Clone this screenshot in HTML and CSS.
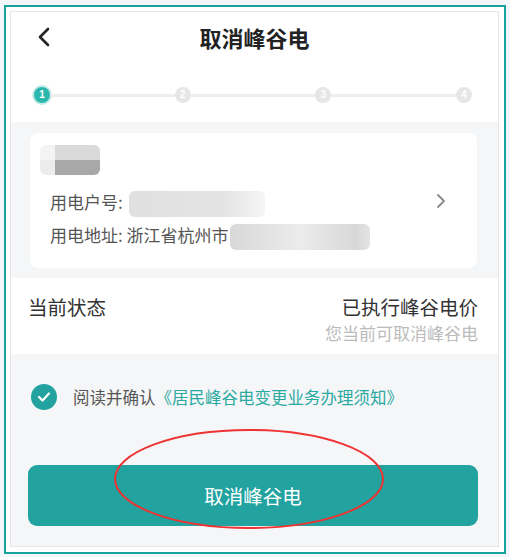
FILE: index.html
```html
<!DOCTYPE html>
<html lang="zh-CN">
<head>
  <meta charset="UTF-8" />
  <meta name="viewport" content="width=device-width, initial-scale=1.0" />
  <title>取消峰谷电</title>
  <link rel="stylesheet" href="styles.css">
</head>
<body>
  <div class="frame">
    <div class="phone">

      <header class="top">
        <div class="nav">
          <svg class="back" width="14" height="20" viewBox="0 0 14 20"><path d="M11 2 L3 10 L11 18" fill="none" stroke="#222" stroke-width="2.6" stroke-linecap="round" stroke-linejoin="round"/></svg>
          <h1 class="title">取消峰谷电</h1>
        </div>
        <div class="steps">
          <span class="dot active">1</span>
          <span class="bar"></span>
          <span class="dot">2</span>
          <span class="bar"></span>
          <span class="dot">3</span>
          <span class="bar"></span>
          <span class="dot">4</span>
        </div>
      </header>

      <div class="card">
        <div class="info">
          <div class="name-blur"></div>
          <p class="line">用电户号: <span class="blur no-blur"></span></p>
          <p class="line">用电地址: 浙江省杭州市<span class="blur addr-blur"></span></p>
        </div>
        <svg class="more" width="10" height="16" viewBox="0 0 10 16"><path d="M2 2 L8 8 L2 14" fill="none" stroke="#888" stroke-width="1.8" stroke-linecap="round" stroke-linejoin="round"/></svg>
      </div>

      <div class="status">
        <span class="status-label">当前状态</span>
        <div class="status-value">
          <span class="main">已执行峰谷电价</span>
          <span class="sub">您当前可取消峰谷电</span>
        </div>
      </div>

      <div class="agree">
        <span class="check">
          <svg width="14" height="12" viewBox="0 0 14 12"><path d="M2 6 L5.5 9.5 L12 2.5" fill="none" stroke="#fff" stroke-width="2.2" stroke-linecap="round" stroke-linejoin="round"/></svg>
        </span>
        <span class="agree-text">阅读并确认</span><span class="link">《居民峰谷电变更业务办理须知》</span>
      </div>

      <div class="action">
        <button class="submit">取消峰谷电</button>
        <svg class="mark" width="274" height="104" viewBox="0 0 274 104"><ellipse cx="137" cy="51" rx="134" ry="49" fill="none" stroke="#ee3333" stroke-width="2"/></svg>
      </div>

    </div>
  </div>
</body>
</html>
```

FILE: styles.css
```css
:root {
  --teal: #22a39f;
  --teal-light: #2bb7ae;
  --bg-page: #f5f6f8;
  --text: #333333;
  --text-mid: #555555;
  --text-light: #bbbbbb;
}

* { box-sizing: border-box; }
body {
  margin: 0;
  background: #f3f7fb;
  font-family: "Noto Sans CJK SC", "Noto Sans", sans-serif;
  color: var(--text);
}

.frame {
  margin: 5px 0 0 4px;
  width: 502px;
  height: 549px;
  border: 2px solid #17a29b;
  padding: 4px 0 0 4px;
  background: #fff;
}
.phone {
  width: 489px;
  height: 536px;
  border: 1px solid #e4e6e9;
  background: var(--bg-page);
  display: flex;
  flex-direction: column;
}

.top { background: #fff; height: 110px; }
.nav {
  position: relative;
  height: 50px;
  display: flex;
  align-items: center;
  justify-content: center;
}
.back { position: absolute; left: 26px; top: 15px; }
.title { margin: 0; font-size: 22px; font-weight: 700; color: #222; }

.steps {
  display: flex;
  align-items: center;
  padding: 0 26px 0 23px;
  margin-top: 25px;
}
.dot {
  width: 16px;
  height: 16px;
  border-radius: 50%;
  background: #e6e6e6;
  color: #fff;
  font-size: 10px;
  line-height: 16px;
  text-align: center;
  font-family: "Liberation Sans", sans-serif;
  font-weight: 700;
  flex: none;
}
.dot.active {
  background: var(--teal-light);
  box-shadow: 0 0 0 2px #c5ece8;
}
.bar { flex: 1; height: 3px; background: #eeeeee; }

.card {
  margin: 11px 21px 0 19px;
  height: 135px;
  background: #fff;
  border-radius: 8px;
  display: flex;
  align-items: center;
  padding: 0 31px 0 20px;
}
.info { flex: 1; align-self: flex-start; padding-top: 12px; }
.name-blur {
  width: 60px;
  height: 30px;
  margin: 0 0 10px -10px;
  border-radius: 6px;
  background:
    linear-gradient(90deg, #f3f3f3 0 15px, transparent 15px) top / 100% 50% no-repeat,
    linear-gradient(90deg, #ececec 0 15px, transparent 15px) bottom / 100% 50% no-repeat,
    linear-gradient(#dadada 0 50%, #a8a8a8 50%);
}
.line { margin: 0; font-size: 17px; line-height: 33px; color: var(--text-mid); white-space: nowrap; }
.blur { display: inline-block; border-radius: 6px; vertical-align: middle; }
.no-blur { width: 136px; height: 26px; margin-left: 2px; background: linear-gradient(90deg, #e0e0e0, #e4e4e4 70%, #f6f6f6); }
.addr-blur { width: 140px; height: 26px; margin-left: 1px; background: linear-gradient(90deg, #d8d8d8, #ececec 50%, #d8d8d8 90%, #e4e4e4); }
.more { flex: none; }

.status {
  margin-top: 10px;
  height: 76px;
  background: #fff;
  display: flex;
  justify-content: space-between;
  align-items: flex-start;
  padding: 14px 20px 0 17px;
}
.status-label { font-size: 19.5px; color: var(--text); line-height: 30px; }
.status-value { display: flex; flex-direction: column; align-items: flex-end; }
.status-value .main { font-size: 19.5px; line-height: 30px; color: var(--text); }
.status-value .sub { font-size: 17px; line-height: 22px; color: var(--text-light); }

.agree {
  display: flex;
  align-items: center;
  padding: 30px 0 0 20px;
  font-size: 16.5px;
}
.check {
  width: 26px;
  height: 26px;
  border-radius: 50%;
  background: var(--teal);
  display: flex;
  align-items: center;
  justify-content: center;
  margin-right: 16px;
}
.agree-text { color: var(--text-mid); }
.link { color: #2aa9a0; }

.action {
  position: relative;
  margin: 55px 20px 0 17px;
}
.submit {
  width: 100%;
  height: 61px;
  border: none;
  border-radius: 9px;
  background: var(--teal);
  color: #fff;
  font-family: inherit;
  font-size: 19.5px;
}
.mark { position: absolute; left: 84px; top: -37px; pointer-events: none; }
```
